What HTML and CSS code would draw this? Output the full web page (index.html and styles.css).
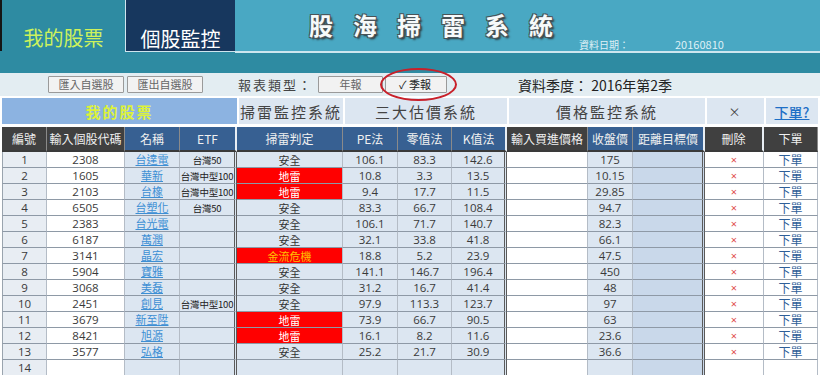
FILE: index.html
```html
<!DOCTYPE html>
<html lang="zh-Hant">
<head>
<meta charset="utf-8">
<title>股海掃雷系統</title>
<link rel="stylesheet" href="styles.css">
</head>
<body>
<div class="top">
  <div class="tabs">
    <div class="tab tab-mine">我的股票</div>
    <div class="tab tab-stock">個股監控</div>
    <div class="title-area">
      <div class="title">股海掃雷系統</div>
      <div class="date"><span class="date-label">資料日期：</span><span>20160810</span></div>
    </div>
  </div>
  <div class="band"></div>
</div>
<div class="toolbar">
  <button class="btn btn-import">匯入自選股</button>
  <button class="btn">匯出自選股</button>
  <span class="label-type">報表類型：</span>
  <button class="btn btn-year">年報</button>
  <button class="btn btn-quarter">✓ 季報</button>
  <span class="season">資料季度： 2016年第2季</span>
  <div class="ring"></div>
</div>
<table class="grid">
  <colgroup>
    <col style="width:45px"><col style="width:78px"><col style="width:55px"><col style="width:57px">
    <col style="width:106px"><col style="width:55px"><col style="width:54px"><col style="width:55px">
    <col style="width:81px"><col style="width:45px"><col style="width:72px">
    <col style="width:59px"><col style="width:54px">
  </colgroup>
  <tr class="sec">
    <td colspan="4" class="sec-mine">我的股票</td>
    <td class="sec-g">掃雷監控系統</td>
    <td colspan="3" class="sec-g">三大估價系統</td>
    <td colspan="3" class="sec-g">價格監控系統</td>
    <td class="sec-g sec-x">×</td>
    <td class="sec-g sec-link"><a href="#">下單?</a></td>
  </tr>
  <tr class="head">
    <th class="hd-dark">編號</th><th class="hd-dark">輸入個股代碼</th><th class="hd-blue">名稱</th><th class="hd-blue sep">ETF</th>
    <th class="hd-blue">掃雷判定</th><th class="hd-blue">PE法</th><th class="hd-blue">零值法</th><th class="hd-blue sep">K值法</th>
    <th class="hd-dark">輸入買進價格</th><th class="hd-blue">收盤價</th><th class="hd-blue sep">距離目標價</th>
    <th class="hd-dark sep">刪除</th><th class="hd-dark">下單</th>
  </tr>
  <tr class="r"><td class="n">1</td><td class="code">2308</td><td class="name"><a href="#">台達電</a></td><td class="etf">台灣50</td><td class="judge">安全</td><td class="v">106.1</td><td class="v">83.3</td><td class="v kv">142.6</td><td class="buy"></td><td class="v">175</td><td class="dist"></td><td class="del">×</td><td class="order">下單</td></tr>
  <tr class="r"><td class="n">2</td><td class="code">1605</td><td class="name"><a href="#">華新</a></td><td class="etf">台灣中型100</td><td class="judge mine">地雷</td><td class="v">10.8</td><td class="v">3.3</td><td class="v kv">13.5</td><td class="buy"></td><td class="v">10.15</td><td class="dist"></td><td class="del">×</td><td class="order">下單</td></tr>
  <tr class="r"><td class="n">3</td><td class="code">2103</td><td class="name"><a href="#">台橡</a></td><td class="etf">台灣中型100</td><td class="judge mine">地雷</td><td class="v">9.4</td><td class="v">17.7</td><td class="v kv">11.5</td><td class="buy"></td><td class="v">29.85</td><td class="dist"></td><td class="del">×</td><td class="order">下單</td></tr>
  <tr class="r"><td class="n">4</td><td class="code">6505</td><td class="name"><a href="#">台塑化</a></td><td class="etf">台灣50</td><td class="judge">安全</td><td class="v">83.3</td><td class="v">66.7</td><td class="v kv">108.4</td><td class="buy"></td><td class="v">94.7</td><td class="dist"></td><td class="del">×</td><td class="order">下單</td></tr>
  <tr class="r"><td class="n">5</td><td class="code">2383</td><td class="name"><a href="#">台光電</a></td><td class="etf"></td><td class="judge">安全</td><td class="v">106.1</td><td class="v">71.7</td><td class="v kv">140.7</td><td class="buy"></td><td class="v">82.3</td><td class="dist"></td><td class="del">×</td><td class="order">下單</td></tr>
  <tr class="r"><td class="n">6</td><td class="code">6187</td><td class="name"><a href="#">萬潤</a></td><td class="etf"></td><td class="judge">安全</td><td class="v">32.1</td><td class="v">33.8</td><td class="v kv">41.8</td><td class="buy"></td><td class="v">66.1</td><td class="dist"></td><td class="del">×</td><td class="order">下單</td></tr>
  <tr class="r"><td class="n">7</td><td class="code">3141</td><td class="name"><a href="#">晶宏</a></td><td class="etf"></td><td class="judge cash">金流危機</td><td class="v">18.8</td><td class="v">5.2</td><td class="v kv">23.9</td><td class="buy"></td><td class="v">47.5</td><td class="dist"></td><td class="del">×</td><td class="order">下單</td></tr>
  <tr class="r"><td class="n">8</td><td class="code">5904</td><td class="name"><a href="#">寶雅</a></td><td class="etf"></td><td class="judge">安全</td><td class="v">141.1</td><td class="v">146.7</td><td class="v kv">196.4</td><td class="buy"></td><td class="v">450</td><td class="dist"></td><td class="del">×</td><td class="order">下單</td></tr>
  <tr class="r"><td class="n">9</td><td class="code">3068</td><td class="name"><a href="#">美磊</a></td><td class="etf"></td><td class="judge">安全</td><td class="v">31.2</td><td class="v">16.7</td><td class="v kv">41.4</td><td class="buy"></td><td class="v">48</td><td class="dist"></td><td class="del">×</td><td class="order">下單</td></tr>
  <tr class="r"><td class="n">10</td><td class="code">2451</td><td class="name"><a href="#">創見</a></td><td class="etf">台灣中型100</td><td class="judge">安全</td><td class="v">97.9</td><td class="v">113.3</td><td class="v kv">123.7</td><td class="buy"></td><td class="v">97</td><td class="dist"></td><td class="del">×</td><td class="order">下單</td></tr>
  <tr class="r"><td class="n">11</td><td class="code">3679</td><td class="name"><a href="#">新至陞</a></td><td class="etf"></td><td class="judge mine">地雷</td><td class="v">73.9</td><td class="v">66.7</td><td class="v kv">90.5</td><td class="buy"></td><td class="v">63</td><td class="dist"></td><td class="del">×</td><td class="order">下單</td></tr>
  <tr class="r"><td class="n">12</td><td class="code">8421</td><td class="name"><a href="#">旭源</a></td><td class="etf"></td><td class="judge mine">地雷</td><td class="v">16.1</td><td class="v">8.2</td><td class="v kv">11.6</td><td class="buy"></td><td class="v">23.6</td><td class="dist"></td><td class="del">×</td><td class="order">下單</td></tr>
  <tr class="r"><td class="n">13</td><td class="code">3577</td><td class="name"><a href="#">弘格</a></td><td class="etf"></td><td class="judge">安全</td><td class="v">25.2</td><td class="v">21.7</td><td class="v kv">30.9</td><td class="buy"></td><td class="v">36.6</td><td class="dist"></td><td class="del">×</td><td class="order">下單</td></tr>
  <tr class="r"><td class="n">14</td><td class="code"></td><td class="name"></td><td class="etf"></td><td class="judge"></td><td class="v"></td><td class="v"></td><td class="v kv"></td><td class="buy"></td><td class="v"></td><td class="dist"></td><td class="del"></td><td class="order"></td></tr>
</table>
</body>
</html>
```
FILE: styles.css
```css
* { box-sizing: border-box; }
html, body { margin: 0; padding: 0; background: #ffffff; }
body {
  width: 820px; height: 375px; overflow: hidden;
  font-family: "Noto Sans CJK TC", "Noto Sans", sans-serif;
  color: #333;
}
.top { background: #2e8ba2; }
.tabs { display: flex; height: 53px; }
.tab { display: flex; align-items: flex-end; justify-content: center; font-size: 20px; line-height: 1; padding-bottom: 3px; }
.tab-mine { width: 125px; color: #cdf25c; border-left: 2px solid #151515; height: 51px; }
.tab-stock { width: 110px; background: #17375e; color: #ffffff; border-left: 1px solid #cfe5ee; border-bottom: 1px solid #cfe5ee; height: 52px; padding-bottom: 2px; }
.title-area { flex: 1; display: flex; background: #49a8c3; border-bottom: 2px solid #cde6ef; }
.title {
  margin: 13px 0 0 74px; font-size: 24px; font-weight: 700; line-height: 1;
  letter-spacing: 20px; color: #f6fafa;
  text-shadow: -1px -1px 0 #4a5458, 1px -1px 0 #4a5458, -1px 1px 0 #4a5458, 1px 1px 0 #4a5458, 2px 2px 2px #2a3438;
}
.date { align-self: flex-end; margin-left: 6px; padding-bottom: 1px; font-size: 10px; line-height: 1; color: #dff0f6; }
.date span:last-child { font-size: 11px; }
.date-label { display: inline-block; width: 96px; }
.band { height: 20px; }
.toolbar {
  position: relative; display: flex; align-items: center; height: 23px;
  background: #e3edf2; font-size: 13px;
}
.btn {
  font-family: "Noto Sans CJK TC", sans-serif; font-size: 11px; line-height: 1;
  height: 17px; padding: 0; background: #f2f2f2; color: #666;
  border: 1px solid #9a9a9a; border-radius: 1px;
}
.btn-import { margin-left: 48px; width: 76px; }
.btn + .btn { margin-left: 3px; width: 76px; }
.label-type { margin-left: 35px; color: #444; letter-spacing: 2px; width: 80px; }
.btn.btn-year { margin-left: 0; width: 65px; }
.btn.btn-quarter { margin-left: 2px; width: 62px; color: #222; text-align: left; padding-left: 13px; }
.season { margin-left: 71px; font-size: 14px; color: #222; }
.ring {
  position: absolute; left: 380px; top: -5px; width: 77px; height: 33px;
  border: 2px solid #c8202a; border-radius: 50%;
}
.grid {
  margin: 2px 0 0 2px; width: 816px; table-layout: fixed;
  border-collapse: separate; border-spacing: 0;
}
.grid td, .grid th { padding: 0; text-align: center; white-space: nowrap; overflow: hidden; }
.sec td { height: 29px; font-size: 15px; letter-spacing: 2px; color: #444; border-bottom: 3px solid #fff; }
.sec .sec-mine { background: #8cb3e1; color: #dcf23a; font-size: 15px; font-weight: 700; }
.sec .sec-g { background: #dce6f1; border-left: 2px solid #fff; }
.sec .sec-x { font-size: 12px; color: #444; }
.sec .sec-link a { color: #1f6fc6; font-weight: 500; font-size: 14px; letter-spacing: 0; }
.head th {
  height: 25px; font-size: 12px; font-weight: 400; color: #f0f0f0;
  border-right: 1px solid #8a8a8a; border-bottom: 2px solid #3a3a3a;
}
.head .hd-dark { background: #404040; }
.head .hd-blue { background: #376092; }
.head .sep { border-right: 2px solid #e8eef4; }
.r td {
  height: 16px; font-size: 11.5px; line-height: 14px;
  border-bottom: 1px solid #8e99a6; border-right: 1px solid #b4bcc6;
  font-family: "Open Sans", "Noto Sans CJK TC", sans-serif; color: #3a3a3a;
}
.r td.n { background: #e8edf3; border-left: 1px solid #9aa4ae; }
.r td.code { background: #ffffff; }
.r td.name { background: #dce6f1; }
.r td.name a { color: #3d8fd4; font-family: "Noto Sans CJK TC", sans-serif; font-size: 11px; }
.r td.etf { background: #dce6f1; font-family: "Noto Sans CJK TC", sans-serif; font-size: 9.5px; color: #222; border-right: 3px double #5a5a5a; letter-spacing: -0.2px; }
.r td.judge { background: #dce6f1; font-family: "Noto Sans CJK TC", sans-serif; font-size: 11px; color: #333; }
.r td.judge.mine { background: #ff0000; color: #ffffff; }
.r td.judge.cash { background: #ff0000; color: #ffc000; }
.r td.v { background: #dce6f1; }
.r td.kv { border-right: 3px double #5a5a5a; }
.r td.buy { background: #ffffff; }
.r td.dist { background: #c9d8ea; border-right: 3px double #5a5a5a; }
.r td.del { background: #ffffff; color: #e04848; font-size: 11px; }
.r td.order { background: #ffffff; color: #2f5f98; font-family: "Noto Sans CJK TC", sans-serif; font-size: 12px; }
```
